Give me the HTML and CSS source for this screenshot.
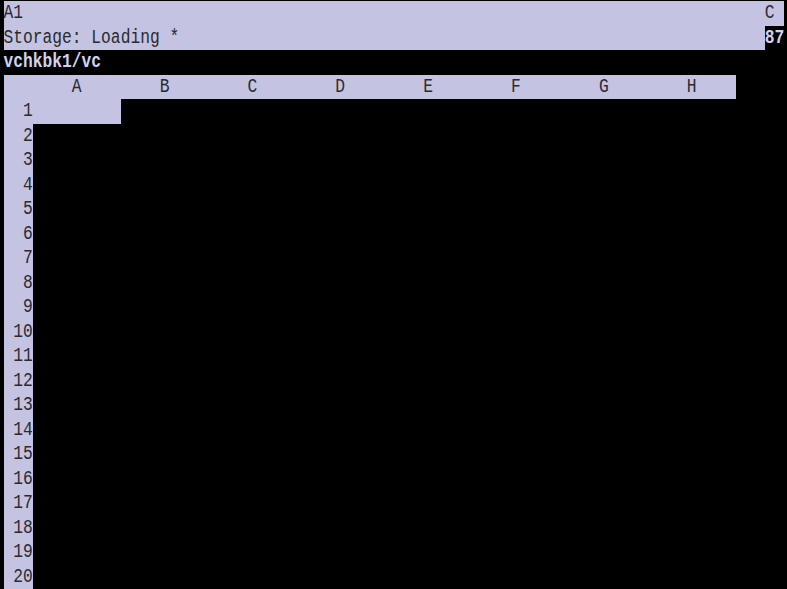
FILE: index.html
```html
<!DOCTYPE html>
<html>
<head>
<meta charset="utf-8">
<link rel="stylesheet" href="styles.css">
</head>
<body>
<div class="screen">
  <div class="line"><div class="hl w80 split"><span class="t">A1</span><span class="t c-right">C</span></div></div>
  <div class="line"><div class="hl w78"><span class="t">Storage: Loading *</span></div><span class="t inv">87</span></div>
  <div class="line"><span class="t inv">vchkbk1/vc</span></div>
  <div class="line">
    <div class="hl header">
      <span class="rowlab"></span>
      <span class="col t">A</span><span class="col t">B</span><span class="col t">C</span><span class="col t">D</span>
      <span class="col t">E</span><span class="col t">F</span><span class="col t">G</span><span class="col t">H</span>
    </div>
  </div>
  <div class="line"><span class="hl rowlab t">1</span><span class="hl col"></span></div>
  <div class="line"><span class="hl rowlab t">2</span></div>
  <div class="line"><span class="hl rowlab t">3</span></div>
  <div class="line"><span class="hl rowlab t">4</span></div>
  <div class="line"><span class="hl rowlab t">5</span></div>
  <div class="line"><span class="hl rowlab t">6</span></div>
  <div class="line"><span class="hl rowlab t">7</span></div>
  <div class="line"><span class="hl rowlab t">8</span></div>
  <div class="line"><span class="hl rowlab t">9</span></div>
  <div class="line"><span class="hl rowlab t">10</span></div>
  <div class="line"><span class="hl rowlab t">11</span></div>
  <div class="line"><span class="hl rowlab t">12</span></div>
  <div class="line"><span class="hl rowlab t">13</span></div>
  <div class="line"><span class="hl rowlab t">14</span></div>
  <div class="line"><span class="hl rowlab t">15</span></div>
  <div class="line"><span class="hl rowlab t">16</span></div>
  <div class="line"><span class="hl rowlab t">17</span></div>
  <div class="line"><span class="hl rowlab t">18</span></div>
  <div class="line"><span class="hl rowlab t">19</span></div>
  <div class="line"><span class="hl rowlab t">20</span></div>
</div>
</body>
</html>
```
FILE: styles.css
```css
html, body {
  margin: 0;
  padding: 0;
  background: #000;
}
.screen {
  padding: 1px 0 0 3.5px;
  font-family: "Liberation Mono", "DejaVu Sans Mono", monospace;
  font-size: 16.28px;
  color: #2a2a30;
  height: 588px;
  overflow: hidden;
}
.line {
  display: flex;
  height: 24.5px;
  line-height: 24.5px;
  white-space: pre;
}
.hl {
  background: #c4c4e2;
  height: 24.5px;
  display: flex;
}
.t {
  display: inline-block;
  transform: scaleY(1.2);
}
.w80 { width: 80ch; }
.w78 { width: 78ch; }
.split { justify-content: space-between; }
.c-right { width: 2ch; }
.inv {
  color: #d2d2ee;
  font-weight: bold;
}
.header { width: 75ch; }
.rowlab {
  display: inline-block;
  width: 3ch;
  text-align: right;
}
.col {
  display: inline-block;
  width: 9ch;
  text-align: center;
}
```
